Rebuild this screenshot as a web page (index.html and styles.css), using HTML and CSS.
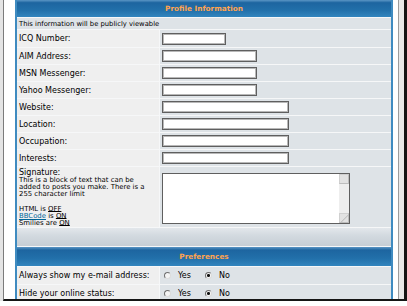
FILE: index.html
```html
<!DOCTYPE html>
<html lang="en">
<head>
	<meta charset="UTF-8">
	<title>Profile</title>
	<link rel="stylesheet" href="styles.css">
</head>
<body>
	<div class="desk">
		<div class="window">
			<div class="page">
				<div class="forum">
					<div class="th">Profile Information</div>
					<div class="row2 span note">This information will be publicly viewable</div>

					<div class="row1 label">ICQ Number:</div>
					<div class="row2 field"><input type="text" class="text w1"></div>

					<div class="row1 label">AIM Address:</div>
					<div class="row2 field"><input type="text" class="text w2"></div>

					<div class="row1 label">MSN Messenger:</div>
					<div class="row2 field"><input type="text" class="text w2"></div>

					<div class="row1 label">Yahoo Messenger:</div>
					<div class="row2 field"><input type="text" class="text w2"></div>

					<div class="row1 label">Website:</div>
					<div class="row2 field"><input type="text" class="text w3"></div>

					<div class="row1 label">Location:</div>
					<div class="row2 field"><input type="text" class="text w3"></div>

					<div class="row1 label">Occupation:</div>
					<div class="row2 field"><input type="text" class="text w3"></div>

					<div class="row1 label">Interests:</div>
					<div class="row2 field"><input type="text" class="text w3"></div>

					<div class="row1 sig">
						<div class="gen">Signature:</div>
						<div class="small">
							<p>This is a block of text that can be</p>
							<p>added to posts you make. There is a</p>
							<p>255 character limit</p>
							<p class="blank"></p>
							<p>HTML is <u>OFF</u></p>
							<p><a href="#">BBCode</a> is <u>ON</u></p>
							<p>Smilies are <u>ON</u></p>
						</div>
					</div>
					<div class="row2 field sigfield">
						<div class="sigbox">
							<textarea></textarea>
							<div class="vscroll">
								<div class="sbtn"></div>
								<div class="strack"></div>
								<div class="sbtn grip"></div>
							</div>
						</div>
					</div>

					<div class="cat span"></div>

					<div class="th">Preferences</div>

					<div class="row1 label">Always show my e-mail address:</div>
					<div class="row2 field opts">
						<label class="opt"><input type="radio" name="viewemail">Yes</label>
						<label class="opt"><input type="radio" name="viewemail" checked>No</label>
					</div>

					<div class="row1 label">Hide your online status:</div>
					<div class="row2 field opts">
						<label class="opt"><input type="radio" name="hideonline">Yes</label>
						<label class="opt"><input type="radio" name="hideonline" checked>No</label>
					</div>
				</div>
			</div>
			<div class="rail"></div>
		</div>
	</div>
</body>
</html>
```

FILE: styles.css
```css
*{
	padding: 0;
	margin: 0;
	box-sizing: border-box;
}
body{
	width: 407px;
	height: 306px;
	overflow: hidden;
	background-color: #fff;
	font-family: "DejaVu Sans", Verdana, sans-serif;
	font-size: 8px;
	color: #000;
}
.desk{
	height: 301px;
	border-left: 3px solid #e4e4e4;
}
.window{
	display: flex;
	height: 301px;
	background-color: #fff;
	border-left: 1px solid #7b7b7b;
	border-right: 3px solid #151515;
	border-bottom: 2px solid #151515;
	overflow: hidden;
}
.page{
	flex: 1;
	padding: 0 5px 0 11px;
	overflow: hidden;
}
.rail{
	width: 6px;
	border-left: 1px solid #9c9c9c;
	background-color: #e9e9e9;
}

/* forum table */
.forum{
	display: grid;
	grid-template-columns: 142px 1fr;
	grid-template-rows: 17px 11px 17px repeat(7, 16px) 60px 18px 19px 17px 17px;
	gap: 1px;
	background-color: #f6f7f8;
	border-left: 2px solid #3f8bc0;
	border-right: 2px solid #3f8bc0;
}
.th{
	grid-column: 1 / -1;
	display: flex;
	align-items: center;
	justify-content: center;
	background: linear-gradient(#5b96c5 0, #1d65a0 16%, #2270aa 60%, #3285be 100%);
	color: #ffa34f;
	font-weight: bold;
	font-size: 7.3px;
}
.span{
	grid-column: 1 / -1;
}
.row1{
	background-color: #efefef;
}
.row2{
	background-color: #dee3e7;
}
.note{
	display: flex;
	align-items: center;
	padding-left: 2px;
	font-size: 6.8px;
}
.label{
	display: flex;
	align-items: center;
	padding-left: 2px;
}
.field{
	display: flex;
	align-items: center;
	padding-left: 2px;
}
.text{
	height: 12px;
	border: 1px solid #5f5f5f;
	box-shadow: inset 0 0 0 1px #b8b8b8;
	background-color: #fff;
	font: inherit;
}
.w1{
	width: 64px;
}
.w2{
	width: 95px;
}
.w3{
	width: 127px;
}

/* signature */
.sig{
	padding: 1px 0 0 2px;
}
.sig .gen{
	height: 9px;
	line-height: 9px;
}
.sig .small p{
	height: 7.2px;
	font-size: 6.9px;
	line-height: 7.2px;
	white-space: nowrap;
}
.sig a{
	color: #006699;
}
.sig u{
	text-underline-offset: 0;
}
.sigfield{
	align-items: flex-start;
	padding-top: 6px;
}
.sigbox{
	display: flex;
	width: 188px;
	height: 51px;
	border: 1px solid #5f5f5f;
	background-color: #fff;
}
.sigbox textarea{
	flex: 1;
	border: 0;
	background-color: #fff;
	resize: none;
	overflow: hidden;
	font: inherit;
}
.vscroll{
	display: flex;
	flex-direction: column;
	width: 10px;
	background-color: #eeeeee;
}
.strack{
	flex: 1;
}
.sbtn{
	height: 10px;
	background-color: #e2e2e2;
	border: 1px solid #d0d0d0;
	border-right-color: #bdbdbd;
	border-bottom-color: #bdbdbd;
}
.grip{
	background: linear-gradient(135deg, #e2e2e2 55%, #c4c4c4 56%, #c4c4c4 62%, #e2e2e2 63%);
}

.cat{
	background: linear-gradient(#e3e7eb 0, #d3dae0 40%, #c6ced5 100%);
}

/* radios */
.opts{
	padding-left: 4px;
}
.opt{
	display: flex;
	align-items: center;
	margin-right: 14px;
}
.opt input{
	appearance: none;
	width: 7px;
	height: 7px;
	margin-right: 7px;
	border-radius: 50%;
	border: 1px solid;
	border-color: #6f6f6f #dcdcdc #dcdcdc #6f6f6f;
	background-color: #f4f4f4;
}
.opt input:checked{
	background: radial-gradient(#111 0, #111 1.2px, #f4f4f4 1.8px);
}
```
